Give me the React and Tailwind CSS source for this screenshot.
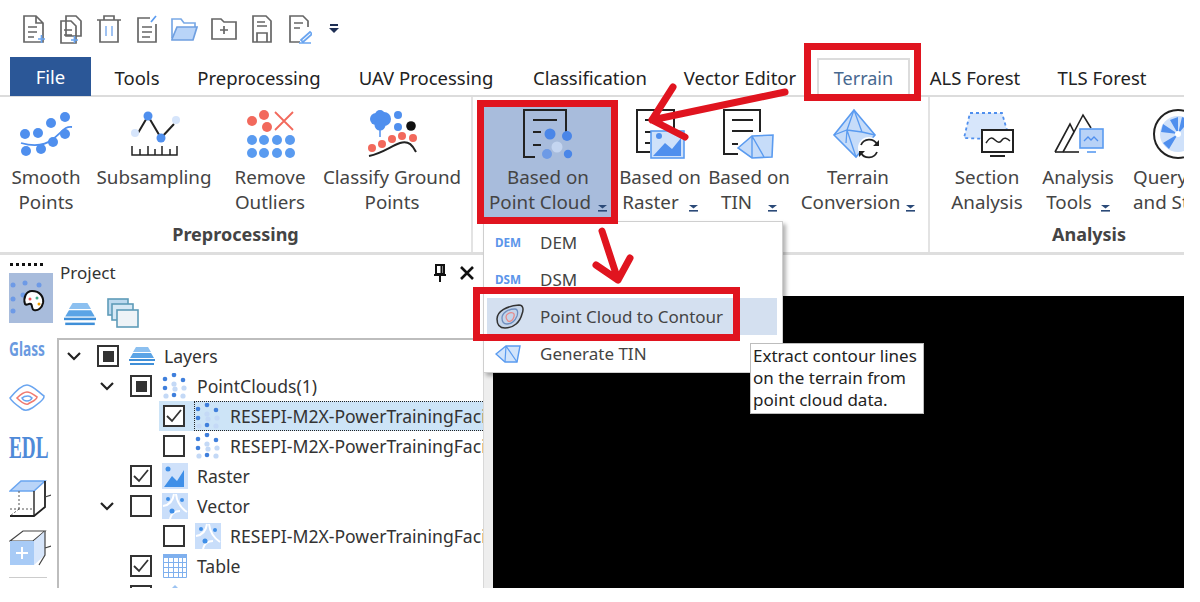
import React from "react";

const B = "#4f8fee", R = "#f2695c", K = "#222";

function Ic({ cx, children }) {
  return (
    <svg className="block shrink-0" width="70" height="54" viewBox={`${cx - 35} 108 70 54`} fill="none">
      {children}
    </svg>
  );
}
const Caret = ({ gap = 7 }) => (
  <svg className="inline-block align-[-3px]" style={{ marginLeft: gap }} width="9" height="7" viewBox="0 0 9 7">
    <path d="M0 0h9L4.5 3.5z" fill="#2b4a78" />
    <rect x="0" y="5" width="9" height="1.6" fill="#2b4a78" />
  </svg>
);

const Dots = ({ list, r, fill }) => list.map(([x, y], i) => <circle key={i} cx={x} cy={y} r={r} fill={fill} />);

const ic = {
  smooth: (
    <Ic cx={46}>
      <Dots r={5} fill={B} list={[[25,134],[38,133],[51,123],[65,117],[65,134],[53,142],[26,151],[41,149]]} />
      <path d="M21 143c10 3 22 4 32-4s12-13 19-12" stroke={B} strokeWidth="1.8" />
    </Ic>
  ),
  sub: (
    <Ic cx={154}>
      <path d="M138 133l10-17 13 22 13-14" stroke={K} strokeWidth="2" />
      <circle cx="148" cy="116" r="4.5" fill={B} />
      <circle cx="161" cy="138" r="4.5" fill={B} />
      <circle cx="135" cy="133" r="4" fill="#d6e5fb" />
      <circle cx="176" cy="120" r="4" fill="#d6e5fb" />
      <path d="M132 146v9h45v-9M140 149v6M148 146v9M155 149v6M162 146v9M170 149v6" stroke={K} strokeWidth="1.5" />
    </Ic>
  ),
  remove: (
    <Ic cx={270}>
      <Dots r={5} fill={R} list={[[252,121],[264,115],[267,127]]} />
      <path d="M275 112l18 18M293 112l-18 18" stroke={R} strokeWidth="1.8" />
      <Dots r={5} fill="#5a9bf0" list={[[252,140],[264,140],[277,140],[290,140],[252,153],[264,153],[277,153],[290,153]]} />
    </Ic>
  ),
  classify: (
    <Ic cx={392}>
      <circle cx="376" cy="119" r="6" fill={B} /><circle cx="384" cy="119" r="7" fill={B} /><circle cx="380" cy="125" r="5.5" fill={B} /><circle cx="380" cy="115" r="5" fill={B} />
      <path d="M380 125v12" stroke={B} strokeWidth="1.5" />
      <Dots r={4} fill={B} list={[[398,115],[398,127]]} />
      <circle cx="411" cy="126" r="4.8" fill="#111" />
      <Dots r={4} fill={R} list={[[372,148],[382,144],[392,139],[402,136],[413,138]]} />
      <path d="M369 156c14-3 22-10 31-13s13 3 16 9" stroke={K} strokeWidth="2" />
    </Ic>
  ),
  pc: (
    <Ic cx={548}>
      <path d="M535 157h-11v-47h42v22" stroke={K} strokeWidth="2" />
      <path d="M533 120h24M533 132h8M533 145h8" stroke={K} strokeWidth="2" />
      <circle cx="550" cy="134" r="5.5" fill="#4a86e8" /><circle cx="567" cy="136" r="5" fill="#4a86e8" />
      <circle cx="557" cy="147" r="5.5" fill="#c4d5f0" /><circle cx="547" cy="154" r="5" fill="#6d9ae6" /><circle cx="568" cy="154" r="4.2" fill="#4a86e8" />
    </Ic>
  ),
  raster: (
    <Ic cx={660}>
      <path d="M650 152h-13v-42h37v20" stroke={K} strokeWidth="2" />
      <path d="M645 120h20M645 132h6M645 143h5" stroke={K} strokeWidth="2" />
      <rect x="651" y="131" width="33" height="27" fill="#cfe1fa" stroke="#5a9bf0" strokeWidth="1.6" />
      <path d="M653 156l12-13 7 6 9-11v18z" fill={B} />
      <circle cx="659" cy="136" r="3" fill={B} />
    </Ic>
  ),
  tin: (
    <Ic cx={749}>
      <path d="M738 154h-14v-44h36v22" stroke={K} strokeWidth="2" />
      <path d="M732 120h21M732 131h21M732 144h6" stroke={K} strokeWidth="2" />
      <path d="M738 148l14-12 21-1-1 22-20 1z" fill="#c6dcf9" stroke="#5a9bf0" strokeWidth="1.6" />
      <path d="M752 136v22M752 136l12 21" stroke="#5a9bf0" strokeWidth="1.4" />
    </Ic>
  ),
  conv: (
    <Ic cx={858}>
      <path d="M854 110l21 25-19 22-22-22z" fill="#c6dcf9" stroke="#5a9bf0" strokeWidth="1.6" />
      <path d="M854 110l-7 20 9 27M854 110l8 22M834 135l13-5 15 2 13 3M847 130l-1 13" stroke="#5a9bf0" strokeWidth="1.3" />
      <circle cx="869" cy="148" r="11" fill="#fff" />
      <path d="M861 145a9 9 0 0 1 16-1M877 152a9 9 0 0 1-16 1" stroke={K} strokeWidth="1.8" />
      <path d="M879 140v6h-6zM859 157v-6h6z" fill={K} />
    </Ic>
  ),
  section: (
    <Ic cx={987}>
      <path d="M970 113h32l4 14 4 13-46-2z" fill="#d7e6fb" stroke={B} strokeWidth="1.8" strokeDasharray="3 3" />
      <rect x="982" y="130" width="31" height="22" fill="#fff" stroke={K} strokeWidth="2" />
      <path d="M986 143c4-6 6-6 9-3s5 3 7 0 5-2 8 1" stroke={K} strokeWidth="1.5" />
      <path d="M990 156h15" stroke={K} strokeWidth="2" />
    </Ic>
  ),
  tools: (
    <Ic cx={1078}>
      <path d="M1055 152l15-28 4 8 9-17 8 13M1063 152l11-20" stroke={K} strokeWidth="1.6" />
      <path d="M1055 152h24" stroke={K} strokeWidth="1.6" />
      <rect x="1080" y="129" width="23" height="19" fill="#b8d2f7" stroke="#5a9bf0" strokeWidth="1.6" />
      <path d="M1084 141l4-4 3 3 3-3 4 4" stroke="#4f8fee" strokeWidth="1.3" />
      <path d="M1087 152h9" stroke="#5a9bf0" strokeWidth="1.6" />
    </Ic>
  ),
  query: (
    <Ic cx={1170}>
      <circle cx="1178" cy="134" r="24" fill="#fff" stroke={K} strokeWidth="2" />
      <circle cx="1178" cy="134" r="18" fill="#cfe1fa" />
      <path d="M1178 134l-8-14 8-3zM1178 134l-17-2 2-8zM1178 134l-9 15-6-6zM1178 134l4-17 8 3z" fill={B} />
      <circle cx="1178" cy="134" r="3" fill="#fff" />
    </Ic>
  ),
};

function RBtn({ w, icon, lines, caret, active, ml = "", left }) {
  return (
    <div className={`flex flex-col items-center h-[110px] shrink-0 ${ml} ${active ? "bg-[#a8bcdc]" : ""}`} style={{ width: w }}>
      <div className="h-[54px] mt-px">{ic[icon]}</div>
      <div className={`text-[#444] text-[18.8px] leading-[25px] whitespace-nowrap mt-[2px] pt-px ${left ? "text-left self-start pl-[11px]" : "text-center"}`}>
        {lines[0]}
        <br />
        {lines[1]}
        {caret !== undefined && <Caret gap={caret} />}
      </div>
    </div>
  );
}

function Group({ w, label, children }) {
  return (
    <div className="h-full relative shrink-0 flex flex-col border-r-2 border-[#e3e3e3]" style={{ width: w }}>
      <div className="flex pt-[10px] h-[125px]">{children}</div>
      <div className="font-bold text-[18px] leading-[24px] text-[#444] text-center">{label}</div>
    </div>
  );
}

const QIc = ({ w, children }) => (
  <svg className="block shrink-0" width={w} height="30" viewBox={`0 0 ${w} 30`} fill="none" stroke="#666" strokeWidth="1.7">
    {children}
  </svg>
);

function Toolbar() {
  return (
    <div className="h-[57px] flex items-center pl-[22px] shrink-0">
      <QIc w={24}><path d="M2 2h12l7 7v19H2zM14 2v7h7M6 13h9M6 18h9M6 23h6" /><path d="M16 25h7M19.5 21v8" stroke="#6aa5f0" /></QIc>
      <div className="w-[12px]" />
      <QIc w={26}><path d="M8 2h10l5 5v15H8zM3 7h10l5 5v17H3zM6 16h8M6 21h8" /><path d="M13 26h7M16.5 22v7" stroke="#6aa5f0" /></QIc>
      <div className="w-[12px]" />
      <QIc w={26}><path d="M1 6h24M8 6V2h10v4M4 6v22h18V6" /><path d="M10 12v10M16 12v10" stroke="#9fc2f2" strokeWidth="2" /></QIc>
      <div className="w-[14px]" />
      <QIc w={22}><path d="M14 4H2v24h18V10M6 13h10M6 18h10M6 23h8" /><path d="M15 8l5-6" stroke="#5a9bf0" /></QIc>
      <div className="w-[13px]" />
      <QIc w={27}><path d="M1 24V5h9l3 4h11v4" stroke="#7aa9e6" /><path d="M1 25l5-12h20l-4 13H1z" fill="#b9d4f8" stroke="#6f9fe0" /></QIc>
      <div className="w-[13px]" />
      <QIc w={26}><path d="M1 25V5h9l3 3h12v17zM9 16h8M13 12v8" /></QIc>
      <div className="w-[14px]" />
      <QIc w={22}><path d="M2 2h13l5 5v21H2zM6 8h8M6 12h10" /><path d="M6 28v-9h10v9" /></QIc>
      <div className="w-[15px]" />
      <QIc w={24}><path d="M12 28H2V2h13l5 5v6M6 9h9M6 14h6" /><path d="M13 26l9-8 2 2-9 8zM11 29h12" stroke="#6aa5f0" /></QIc>
      <div className="w-[17px]" />
      <svg width="10" height="12" viewBox="0 0 10 12"><rect x="1" y="1" width="8" height="2" fill="#1e2f55" /><path d="M0 5h10l-5 5z" fill="#1e2f55" /></svg>
    </div>
  );
}

function Tabs() {
  const items = [
    ["Tools", 92],
    ["Preprocessing", 152],
    ["UAV Processing", 182],
    ["Classification", 146],
    ["Vector Editor", 154],
  ];
  return (
    <div className="h-[40px] flex shrink-0 border-b-2 border-[#dcdcdc] pl-[10px] text-[18.5px] text-[#222]">
      <div className="w-[81px] h-[39px] bg-[#2b5797] text-white flex items-center justify-center shrink-0">File</div>
      {items.map(([t, w]) => (
        <div key={t} className="h-[38px] flex items-center justify-center pt-[3px] shrink-0" style={{ width: w }}>{t}</div>
      ))}
      <div className="w-[93px] h-[39px] mt-[1px] border-2 border-b-0 border-[#dcdcdc] bg-white text-[#47688f] text-[18px] flex items-center justify-center shrink-0">Terrain</div>
      <div className="w-[130px] h-[38px] flex items-center justify-center pt-[3px] shrink-0">ALS Forest</div>
      <div className="w-[124px] h-[38px] flex items-center justify-center pt-[3px] shrink-0">TLS Forest</div>
    </div>
  );
}

function Ribbon() {
  return (
    <div className="h-[158px] flex shrink-0 border-b-[3px] border-[#dedede] overflow-hidden">
      <Group w={473} label="Preprocessing">
        <RBtn w={92} icon="smooth" lines={["Smooth", "Points"]} />
        <RBtn w={124} icon="sub" lines={["Subsampling", "\u00a0"]} />
        <RBtn w={108} icon="remove" lines={["Remove", "Outliers"]} />
        <RBtn w={136} icon="classify" lines={["Classify Ground", "Points"]} />
      </Group>
      <Group w={457} label="">
        <RBtn w={128} ml="ml-[11px]" icon="pc" lines={["Based on", "Point Cloud"]} caret={7} active />
        <RBtn w={96} icon="raster" lines={["Based on", "Raster"]} caret={10} />
        <RBtn w={82} icon="tin" lines={["Based on", "TIN"]} caret={16} />
        <RBtn w={136} icon="conv" lines={["Terrain", "Conversion"]} caret={6} />
      </Group>
      <div className="w-[254px] h-full shrink-0 flex flex-col">
        <div className="flex pt-[10px] h-[125px] pl-[10px]">
          <RBtn w={94} icon="section" lines={["Section", "Analysis"]} />
          <RBtn w={88} icon="tools" lines={["Analysis", "Tools"]} caret={9} />
          <RBtn w={96} icon="query" lines={["Query", "and St"]} left />
        </div>
        <div className="font-bold text-[18px] leading-[24px] text-[#444] pl-[122px]">Analysis</div>
      </div>
    </div>
  );
}

function StripIcons() {
  return (
    <div className="w-[57px] shrink-0 pl-[9px] flex flex-col">
      <div className="h-[9px] mt-[8px] flex gap-[3px] pl-px">
        {[0, 1, 2, 3, 4, 5].map((i) => <div key={i} className="w-[3px] h-[3px] bg-[#111]" />)}
      </div>
      <div className="w-[44px] h-[50px] bg-[#a8bcdc] mt-px">
        <svg width="44" height="50" viewBox="0 0 44 50" fill="none">
          <Dots r={2.5} fill="#6d9ae6" list={[[4,12],[16,10],[30,12],[4,26],[14,22],[4,38]]} />
          <path d="M23 18c8 0 12 6 11 12-1 5-5 8-9 7-3-1-1-4-3-6-3-1-4 2-6 0-2-6 1-13 7-13z" fill="#fff" stroke="#111" strokeWidth="2" />
          <circle cx="21" cy="26" r="1.5" fill="#e55" /><circle cx="28" cy="25" r="1.5" fill="#4a8" /><circle cx="30" cy="31" r="1.5" fill="#e90" />
        </svg>
      </div>
      <div className="h-[24px] mt-[14px] text-[19px] leading-[24px] font-bold text-[#6a9ae0] origin-left scale-x-[0.72] whitespace-nowrap">Glass</div>
      <svg className="mt-[21px] block" width="37" height="32" viewBox="0 0 37 32" fill="none">
        <path d="M1 16C6 10 12 3 18 3s12 8 17 11c1 4-8 9-12 12-3 2-7 3-10 1C9 24 3 20 1 16z" stroke="#6aa5f0" strokeWidth="1.6" />
        <path d="M8 16c3-3 6-6 10-6s7 3 10 5c0 3-6 5-9 7-3 1-8-3-11-6z" stroke="#f07a70" strokeWidth="1.6" />
        <path d="M13 16c2-2 4-2 6-2s3 1 4 2c-1 2-3 3-5 3s-4-1-5-3z" stroke="#6aa5f0" strokeWidth="1.6" />
      </svg>
      <div className="h-[30px] mt-[19px] text-[31px] leading-[30px] font-bold text-[#4f8ad8] origin-left scale-x-[0.62] whitespace-nowrap [font-family:'Liberation_Serif',serif]">EDL</div>
      <svg className="mt-[16px] block" width="42" height="40" viewBox="0 0 42 40" fill="none">
        <path d="M1 12L12 2h24L25 12H1z" fill="#b9d4f8" stroke="#6aa5f0" strokeWidth="1.5" />
        <path d="M36 2v26l-11 9H1" stroke="#222" strokeWidth="1.8" />
        <path d="M25 12v25" stroke="#222" strokeWidth="1.4" />
        <path d="M1 30h24M10 30L1 37M10 12v18" stroke="#555" strokeWidth="1" strokeDasharray="2 2" />
        <path d="M36 18l6-2" stroke="#444" strokeWidth="1.2" />
      </svg>
      <svg className="mt-[9px] block" width="42" height="40" viewBox="0 0 42 40" fill="none">
        <path d="M1 13L14 3h22L24 13z" fill="none" stroke="#444" strokeWidth="1.2" />
        <rect x="1" y="13" width="24" height="24" fill="#a8cbf6" />
        <path d="M25 13l11-10v24L25 37z" fill="#d7e6fb" />
        <path d="M13 19v12M7 25h12" stroke="#fff" strokeWidth="2" />
        <path d="M36 3v24l-6 10M36 20l6-2" stroke="#444" strokeWidth="1.2" />
      </svg>
      <div className="w-[38px] h-px bg-[#ccc] mt-[9px]" />
    </div>
  );
}

const Chev = () => (
  <svg width="16" height="11" viewBox="0 0 16 11" fill="none"><path d="M2 2l6 6 6-6" stroke="#222" strokeWidth="2.2" /></svg>
);
function Check({ state }) {
  return (
    <div className="w-[22px] h-[22px] border-2 border-[#333] flex items-center justify-center bg-white shrink-0">
      {state === "part" && <div className="w-[11px] h-[11px] bg-[#333]" />}
      {state === "on" && (
        <svg width="16" height="14" viewBox="0 0 16 14" fill="none"><path d="M1 7l5 5 9-11" stroke="#333" strokeWidth="1.8" /></svg>
      )}
    </div>
  );
}
const TLayers = () => (
  <svg width="26" height="20" viewBox="0 0 26 20" fill="none">
    <path d="M7 1h12l3 5H4z" fill="#8cc0f0" /><path d="M4 7h18l3 5H1z" fill="#5ba4e6" /><rect x="0" y="13" width="26" height="2" fill="#3f8fd8" /><rect x="1" y="17" width="24" height="2" fill="#3f8fd8" />
  </svg>
);
const TPts = () => (
  <svg width="26" height="26" viewBox="0 0 26 26">
    <Dots r={2.3} fill="#3f7fdc" list={[[12,2],[3,6],[21,7],[3,15],[12,22]]} />
    <Dots r={2.6} fill="#c4d9f6" list={[[12,11],[22,15],[21,23],[4,23],[13,16]]} />
  </svg>
);
const TRaster = () => (
  <svg width="26" height="26" viewBox="0 0 26 26"><rect width="26" height="26" fill="#cfe1fa" /><path d="M2 24l8-11 5 5 7-11v17z" fill="#3f8fe8" /><circle cx="6" cy="6" r="2.5" fill="#3f8fe8" /></svg>
);
const TVector = () => (
  <svg width="26" height="26" viewBox="0 0 26 26" fill="none"><rect width="26" height="26" fill="#c9defa" /><path d="M14 1c1 9 5 14 11 18M1 13c7-1 10-5 11-12M8 26c1-5 5-8 10-8" stroke="#fff" strokeWidth="2" /><circle cx="6" cy="6" r="2" fill="#3f8fe8" /><circle cx="10" cy="18" r="2.5" fill="#3f8fe8" /><circle cx="20" cy="7" r="2" fill="#3f8fe8" /></svg>
);
const TTable = () => (
  <svg width="24" height="24" viewBox="0 0 24 24" fill="none" stroke="#7fb0ee" strokeWidth="1"><path d="M.5 3.5h23v20H.5zM.5 8.5h23M.5 13.5h23M.5 18.5h23M5.5 3.5v20M10.5 3.5v20M15.5 3.5v20M19.5 3.5v20" /><rect x=".5" y=".5" width="23" height="3" fill="#7fb0ee" /></svg>
);
const TUp = () => (
  <svg width="24" height="24" viewBox="0 0 24 24"><path d="M12 1l8 8H4z" fill="#9cc3f2" /></svg>
);

function Row({ level, chev, check, icon, text, selected }) {
  return (
    <div className="h-[30px] flex items-center shrink-0 whitespace-nowrap" style={{ paddingLeft: 7 + level * 33 }}>
      <div className="w-[16px] shrink-0 flex justify-center">{chev && <Chev />}</div>
      <div className={`ml-[11px] flex-1 flex items-center h-[30px] pl-[4px] ${selected ? "bg-[#cde4f7]" : ""}`}>
        <Check state={check} />
        <div className={`ml-[9px] flex-1 flex items-center h-[30px] border border-dotted ${selected ? "border-[#222]" : "border-transparent"}`}>
          <div className="w-[26px] flex justify-center shrink-0">{icon}</div>
          <span className="ml-[9px] text-[17.6px] text-[#333] leading-[28px]">{text}</span>
        </div>
      </div>
    </div>
  );
}

function Tree() {
  const name = "RESEPI-M2X-PowerTrainingFacility";
  return (
    <div className="flex-1 min-h-0 border-2 border-b-0 border-r-0 border-[#bdbdbd] overflow-hidden flex flex-col pt-px">
      <Row level={0} chev check="part" icon={<TLayers />} text="Layers" />
      <Row level={1} chev check="part" icon={<TPts />} text="PointClouds(1)" />
      <Row level={2} check="on" icon={<TPts />} text={name} selected />
      <Row level={2} check="off" icon={<TPts />} text={name} />
      <Row level={1} check="on" icon={<TRaster />} text="Raster" />
      <Row level={1} chev check="off" icon={<TVector />} text="Vector" />
      <Row level={2} check="off" icon={<TVector />} text={name} />
      <Row level={1} check="on" icon={<TTable />} text="Table" />
      <Row level={1} check="off" icon={<TUp />} text="" />
    </div>
  );
}

function Project() {
  return (
    <div className="w-[427px] shrink-0 flex flex-col border-r border-[#d8d8d8]">
      <div className="h-[35px] flex items-center pl-[3px] pr-[8px] shrink-0 text-[17px] text-[#333]">
        <span className="flex-1">Project</span>
        <svg className="mr-[12px]" width="14" height="20" viewBox="0 0 14 20" fill="none"><path d="M3 2h8v9H3zM1 12h12M7 12v7M8.5 2v9" stroke="#111" strokeWidth="2" /></svg>
        <svg width="16" height="16" viewBox="0 0 16 16" fill="none"><path d="M2 2l12 12M14 2L2 14" stroke="#111" strokeWidth="2.6" /></svg>
      </div>
      <div className="h-[48px] flex items-start pl-[7px] pt-[8px] gap-[11px] shrink-0">
        <svg width="32" height="28" viewBox="0 0 26 20" className="mt-[2px]" fill="none"><path d="M7 1h12l3 5H4z" fill="#8cc0f0" /><path d="M4 7h18l3 5H1z" fill="#5ba4e6" /><rect x="0" y="13" width="26" height="2" fill="#3f8fd8" /><rect x="1" y="17" width="24" height="2" fill="#3f8fd8" /></svg>
        <svg width="32" height="30" viewBox="0 0 32 30" fill="none" stroke="#5e9bb8" strokeWidth="1.6">
          <rect x="1" y="1" width="20" height="16" fill="#bcd9ef" /><rect x="5" y="6" width="21" height="16" fill="#d6e8f5" /><rect x="10" y="12" width="21" height="17" fill="#eef3f7" />
        </svg>
      </div>
      <Tree />
    </div>
  );
}

function Menu() {
  const row = "h-[37px] flex items-center pl-[11px] text-[17px] text-[#444]";
  const Abbr = ({ t }) => <span className="w-[45px] shrink-0 text-[13px] font-bold text-[#5b95ea] origin-left scale-x-90 block">{t}</span>;
  return (
    <div className="absolute left-[483px] top-[221px] w-[300px] h-[152px] bg-white border border-[#cfcfcf] shadow-[3px_3px_4px_rgba(0,0,0,0.3)] pt-[2px]">
      <div className={row}><Abbr t="DEM" />DEM</div>
      <div className={row}><Abbr t="DSM" />DSM</div>
      <div className="h-[37px] flex items-center pl-[8px] ml-[3px] mr-[5px] text-[17px] text-[#444] bg-[#d4e0f0]">
        <svg className="w-[45px] shrink-0" width="45" height="28" viewBox="0 0 45 28" fill="none">
          <path d="M2 16C2 8 12 3 24 2c4 0 5 4 3 9-2 8-8 14-17 14-5 0-8-3-8-9z" fill="#c5d5ea" stroke="#333" strokeWidth="1.5" />
          <path d="M7 15c0-5 6-9 13-9 3 0 3 4 2 7-2 5-5 8-10 8-3 0-5-2-5-6z" stroke="#6f8fc0" strokeWidth="1.3" />
          <path d="M11 14c0-3 4-5 7-4 2 1 1 4 0 6s-4 3-5 2-2-2-2-4z" stroke="#e78a8a" strokeWidth="1.3" />
        </svg>
        Point Cloud to Contour
      </div>
      <div className={row}>
        <svg className="w-[45px] shrink-0" width="45" height="20" viewBox="0 0 45 20" fill="none">
          <path d="M1 10L11 2h14l-3 16H10z" fill="#d2e4fb" stroke="#5a9bf0" strokeWidth="1.4" />
          <path d="M11 2l-1 16M11 2l11 16" stroke="#5a9bf0" strokeWidth="1.2" />
        </svg>
        Generate TIN
      </div>
    </div>
  );
}

export default function App() {
  return (
    <div className="w-[1200px] h-[602px] bg-white overflow-hidden relative [font-family:'Noto_Sans',sans-serif]">
      <div className="w-[1184px] h-[588px] overflow-hidden relative flex flex-col">
        <Toolbar />
        <Tabs />
        <Ribbon />
        <div className="flex-1 min-h-0 flex">
          <StripIcons />
          <Project />
          <div className="flex-1 flex flex-col">
            <div className="h-[41px] shrink-0" />
            <div className="flex-1 flex">
              <div className="w-[9px] bg-[#eeeeee]" />
              <div className="flex-1 bg-black" />
            </div>
          </div>
        </div>

        <Menu />

        <div className="absolute left-[750px] top-[343px] w-[174px] h-[71px] bg-white border border-[#bdbdbd] pl-[2px] pt-px text-[17px] leading-[22px] text-[#222] whitespace-nowrap">
          Extract contour lines<br />on the terrain from<br />point cloud data.
        </div>

        <div className="absolute left-[804px] top-[43px] w-[117px] h-[58px] border-[7px] border-[#e0141f]" />
        <div className="absolute left-[477px] top-[100px] w-[141px] h-[124px] border-[7px] border-[#e0141f]" />
        <div className="absolute left-[473px] top-[287px] w-[267px] h-[54px] border-[7px] border-[#e0141f]" />

        <svg className="absolute left-0 top-0 pointer-events-none" width="1184" height="588" viewBox="0 0 1184 588" fill="none">
          <path d="M785 92L652 120M673 87L652 120L685 137" stroke="#e0141f" strokeWidth="7" strokeLinecap="round" strokeLinejoin="round" />
          <path d="M602 231L618 280M596 265L618 280L630 258" stroke="#e0141f" strokeWidth="7" strokeLinecap="round" strokeLinejoin="round" />
        </svg>
      </div>
    </div>
  );
}
